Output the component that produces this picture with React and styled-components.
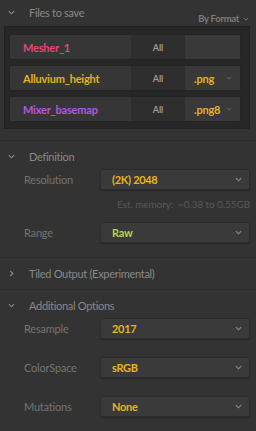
import React from "react";
import styled, { createGlobalStyle } from "styled-components";

const GlobalStyle = createGlobalStyle`
  html, body {
    margin: 0;
    padding: 0;
    background: #333333;
  }
  body {
    font-family: "Lato", "Noto Sans", sans-serif;
    font-size: 11px;
    color: #8a8a8a;
  }
`;

const files = [
  { name: "Mesher_1", color: "#e8437a", format: null },
  { name: "Alluvium_height", color: "#e3b21e", format: ".png" },
  { name: "Mixer_basemap", color: "#b457de", format: ".png8" },
];

function Chevron({ open, size = 7, color = "#8a8a8a" }) {
  return (
    <svg width={size} height={size} viewBox="0 0 8 8" fill="none">
      {open ? (
        <path d="M1 2.5 L4 5.5 L7 2.5" stroke={color} strokeWidth="1.3" />
      ) : (
        <path d="M2.5 1 L5.5 4 L2.5 7" stroke={color} strokeWidth="1.3" />
      )}
    </svg>
  );
}

function App() {
  return (
    <>
      <GlobalStyle />
      <Panel>
        <FilesSection>
          <FilesHeader>
            <HeaderLeft>
              <Toggle><Chevron open /></Toggle>
              <Title>Files to save</Title>
            </HeaderLeft>
            <ByFormat>
              By Format <Chevron open size={6} color="#777" />
            </ByFormat>
          </FilesHeader>
          <FilesBox>
            {files.map((f) => (
              <FileRow key={f.name}>
                <FileName $color={f.color}>{f.name}</FileName>
                <AllCell>All</AllCell>
                <FormatCell>
                  {f.format && (
                    <>
                      <span>{f.format}</span>
                      <Chevron open size={6} color="#666" />
                    </>
                  )}
                </FormatCell>
              </FileRow>
            ))}
          </FilesBox>
        </FilesSection>

        <Section>
          <SectionHeader>
            <Toggle><Chevron open /></Toggle>
            <Title>Definition</Title>
          </SectionHeader>
          <Fields>
            <Field>
              <Label>Resolution</Label>
              <Select $color="#e6b51f">
                <span>(2K) 2048</span>
                <Chevron open size={7} color="#888" />
              </Select>
            </Field>
            <Note>Est. memory:&nbsp; ~0.38 to 0.55GB</Note>
            <Field>
              <Label>Range</Label>
              <Select $color="#b3d45c">
                <span>Raw</span>
                <Chevron open size={7} color="#888" />
              </Select>
            </Field>
          </Fields>
        </Section>

        <Section>
          <SectionHeader $collapsed>
            <Toggle><Chevron /></Toggle>
            <Title>Tiled Output (Experimental)</Title>
          </SectionHeader>
        </Section>

        <Section>
          <SectionHeader>
            <Toggle><Chevron open /></Toggle>
            <Title>Additional Options</Title>
          </SectionHeader>
          <Fields $gap={18}>
            {[
              ["Resample", "2017"],
              ["ColorSpace", "sRGB"],
              ["Mutations", "None"],
            ].map(([label, value]) => (
              <Field key={label}>
                <Label>{label}</Label>
                <Select $color="#e6b51f">
                  <span>{value}</span>
                  <Chevron open size={7} color="#888" />
                </Select>
              </Field>
            ))}
          </Fields>
        </Section>
      </Panel>
    </>
  );
}

export default App;

const Panel = styled.div`
  width: 256px;
  min-height: 431px;
  background: #333333;
  overflow: hidden;
`;

const FilesSection = styled.div`
  padding-bottom: 11px;
`;

const FilesHeader = styled.div`
  display: flex;
  justify-content: space-between;
  height: 26px;
`;

const HeaderLeft = styled.div`
  display: flex;
  align-items: center;
  height: 25px;
`;

const Toggle = styled.div`
  width: 29px;
  display: flex;
  justify-content: center;
  padding-right: 8px;
  box-sizing: border-box;
  padding-left: 2px;
`;

const Title = styled.span`
  font-size: 11px;
  letter-spacing: -0.3px;
  color: #888888;
`;

const ByFormat = styled.div`
  align-self: flex-end;
  display: flex;
  align-items: center;
  gap: 4px;
  padding: 0 7px 2px 0;
  font-size: 9.5px;
  font-weight: 700;
  letter-spacing: -0.3px;
  color: #7c7c7c;
`;

const FilesBox = styled.div`
  margin: 0 6px 0 4px;
  padding: 7px 8px 6px 4px;
  background: #272727;
  border: 1px solid #222;
  display: flex;
  flex-direction: column;
  gap: 5px;
`;

const FileRow = styled.div`
  display: grid;
  grid-template-columns: 1fr 54px 55px;
  height: 26px;
  border: 1px solid #242424;
  border-radius: 2px;
  background: #363636;
  box-sizing: border-box;
  overflow: hidden;
`;

const FileName = styled.div`
  display: flex;
  align-items: center;
  padding-left: 13px;
  font-size: 11px;
  font-weight: 700;
  letter-spacing: -0.2px;
  color: ${(p) => p.$color};
`;

const AllCell = styled.div`
  display: flex;
  align-items: center;
  justify-content: center;
  background: #2e2e2e;
  font-size: 9px;
  font-weight: 700;
  color: #999999;
`;

const FormatCell = styled.div`
  display: flex;
  align-items: center;
  justify-content: space-between;
  padding: 0 8px 0 9px;
  background: #393939;
  font-size: 11px;
  font-weight: 700;
  letter-spacing: -0.2px;
  color: #e3b21e;
`;

const Section = styled.div`
  border-top: 1px solid #2a2a2a;
`;

const SectionHeader = styled.div`
  display: flex;
  align-items: center;
  height: 26px;
  padding: 2px 0 ${(p) => (p.$collapsed ? "3px" : "0")};
`;

const Fields = styled.div`
  display: flex;
  flex-direction: column;
  gap: ${(p) => p.$gap || 0}px;
  padding: 0 6px 14px 24px;
`;

const Field = styled.div`
  display: flex;
  align-items: center;
`;

const Label = styled.span`
  width: 76px;
  font-size: 11px;
  letter-spacing: -0.2px;
  color: #747474;
`;

const Select = styled.div`
  flex: 1;
  height: 21px;
  box-sizing: border-box;
  display: flex;
  align-items: center;
  justify-content: space-between;
  padding: 0 7px 0 11px;
  background: #3a3a3a;
  border: 1px solid #2c2c2c;
  border-radius: 2px;
  box-shadow: 0 1px 1px rgba(0, 0, 0, 0.25);
  font-size: 11px;
  font-weight: 700;
  letter-spacing: -0.3px;
  color: ${(p) => p.$color};
`;

const Note = styled.div`
  margin: 7px 0 11px;
  line-height: 14px;
  text-align: right;
  font-size: 10px;
  letter-spacing: -0.1px;
  color: #585858;
`;
